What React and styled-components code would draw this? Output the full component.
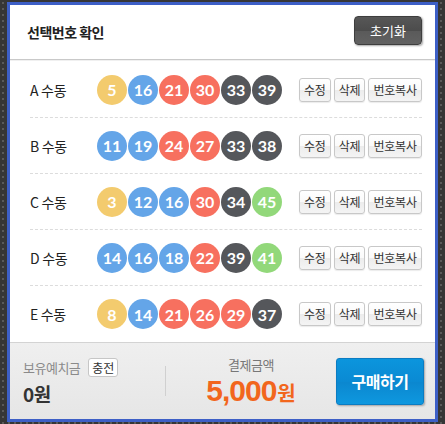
import styled, { createGlobalStyle } from 'styled-components';

const GlobalStyle = createGlobalStyle`
    * { box-sizing: border-box; }
    body {
        margin: 0;
        font-family: "Noto Sans CJK KR", "Noto Sans", sans-serif;
        background-color: #363636;
        background-image: radial-gradient(#5a5a5a 1px, transparent 1.4px);
        background-size: 6px 6px;
    }
`;

const Page = styled.div`
    height: 424px;
    padding: 2px 7px;
`;
const Panel = styled.div`
    display: flex;
    flex-direction: column;
    height: 420px;
    background: #fff;
    border: 3px solid #3d5fc6;
`;
const Header = styled.div`
    display: flex;
    align-items: center;
    justify-content: space-between;
    height: 55px;
    padding: 0 13px 0 17px;
    border-bottom: 1px solid #c9c9c9;
    box-shadow: 0 1px 0 #f0f0f0;
`;
const Title = styled.h2`
    margin: 0;
    font-size: 14px;
    font-weight: 700;
    letter-spacing: -0.5px;
    color: #222;
`;
const ResetButton = styled.button`
    width: 68px;
    height: 29px;
    margin-top: -3px;
    border: 1px solid #3e3e3e;
    border-radius: 4px;
    background: linear-gradient(#575757 0%, #4c4c4c 50%, #5a5a5a 51%, #616161 100%);
    box-shadow: 1px 1px 2px rgba(0, 0, 0, .35);
    color: #fff;
    font-family: inherit;
    font-size: 13px;
`;
const List = styled.div`
    flex: 1;
    padding: 2px 13px 0 20px;
`;
const Row = styled.div`
    display: flex;
    align-items: center;
    height: 56px;
    border-bottom: 1px dashed #dcdcdc;
    &:last-child {
        border-bottom: none;
    };
`;
const Label = styled.span`
    width: 67px;
    font-size: 14px;
    letter-spacing: -0.3px;
    color: #222;
`;
const Balls = styled.div`
    display: flex;
    gap: 1px;
    margin-right: 17px;
`;
const Ball = styled.span`
    display: flex;
    align-items: center;
    justify-content: center;
    width: 30px;
    height: 30px;
    border-radius: 50%;
    background: ${props => props.color};
    color: #fff;
    font-family: Lato, "Noto Sans", sans-serif;
    font-size: 16px;
    font-weight: 700;
`;
const Actions = styled.div`
    display: flex;
    gap: 3px;
`;
const SmallButton = styled.button`
    height: 24px;
    padding: 0 4px;
    border: 1px solid #c8c8c8;
    border-radius: 3px;
    background: linear-gradient(#fff 0%, #fafafa 50%, #ececec 51%, #f4f4f4 100%);
    box-shadow: 0 1px 1px rgba(0, 0, 0, .08);
    color: #333;
    font-family: inherit;
    font-size: 12px;
    letter-spacing: -0.2px;
    line-height: 1;
`;
const Footer = styled.div`
    display: flex;
    align-items: center;
    height: 77px;
    padding: 0 11px 0 13px;
    border-top: 1px solid #d3d3d3;
    background: linear-gradient(#efefef, #e6e6e6);
`;
const Deposit = styled.div`
    display: flex;
    flex-direction: column;
    gap: 6px;
    width: 142px;
    padding-top: 2px;
`;
const DepositTop = styled.div`
    display: flex;
    align-items: center;
    gap: 8px;
`;
const Caption = styled.span`
    font-size: 13px;
    letter-spacing: -0.5px;
    line-height: 1.2;
    color: ${props => props.dark ? '#777' : '#8a8a8a'};
`;
const ChargeButton = styled.button`
    height: 19px;
    padding: 0 3px;
    border: 1px solid #c6c6c6;
    border-radius: 3px;
    background: #fff;
    color: #333;
    font-family: inherit;
    font-size: 12px;
    line-height: 1;
`;
const Balance = styled.span`
    font-size: 19px;
    font-weight: 700;
    letter-spacing: -0.5px;
    line-height: 1.2;
    color: #333;
`;
const Divider = styled.div`
    width: 1px;
    height: 30px;
    background: #d0d0d0;
`;
const Total = styled.div`
    flex: 1;
    display: flex;
    flex-direction: column;
    align-items: center;
    gap: 3px;
    padding-top: 1px;
`;
const Amount = styled.div`
    display: flex;
    align-items: baseline;
    color: #f2661d;
    line-height: 1;
`;
const Digits = styled.span`
    font-family: "Liberation Sans", Arial, sans-serif;
    font-size: 30px;
    font-weight: 700;
    letter-spacing: -1px;
`;
const Won = styled.span`
    margin-left: 1px;
    font-size: 20px;
    font-weight: 700;
`;
const BuyButton = styled.button`
    width: 88px;
    height: 47px;
    border: 1px solid #0b7cc2;
    border-radius: 3px;
    background: linear-gradient(#0b95dd 0%, #0a8ad3 50%, #0b87cf 51%, #0e98df 100%);
    box-shadow: 1px 1px 2px rgba(0, 0, 0, .3);
    color: #fff;
    font-family: inherit;
    font-size: 16px;
    font-weight: 700;
    letter-spacing: -0.5px;
`;

const rows = [
    { name: 'A', nums: [5, 16, 21, 30, 33, 39] },
    { name: 'B', nums: [11, 19, 24, 27, 33, 38] },
    { name: 'C', nums: [3, 12, 16, 30, 34, 45] },
    { name: 'D', nums: [14, 16, 18, 22, 39, 41] },
    { name: 'E', nums: [8, 14, 21, 26, 29, 37] },
];

const ballColor = (n) => {
    if (n <= 10) return '#f3cb6e';
    if (n <= 20) return '#64a5e8';
    if (n <= 30) return '#f7705f';
    if (n <= 40) return '#55575b';
    return '#92d87a';
};

const App = () => {
    return (
        <Page>
            <GlobalStyle />
            <Panel>
                <Header>
                    <Title>선택번호 확인</Title>
                    <ResetButton>초기화</ResetButton>
                </Header>
                <List>
                    {rows.map(row => (
                        <Row key={row.name}>
                            <Label>{row.name} 수동</Label>
                            <Balls>
                                {row.nums.map(n => (
                                    <Ball key={n} color={ballColor(n)}>{n}</Ball>
                                ))}
                            </Balls>
                            <Actions>
                                <SmallButton>수정</SmallButton>
                                <SmallButton>삭제</SmallButton>
                                <SmallButton>번호복사</SmallButton>
                            </Actions>
                        </Row>
                    ))}
                </List>
                <Footer>
                    <Deposit>
                        <DepositTop>
                            <Caption>보유예치금</Caption>
                            <ChargeButton>충전</ChargeButton>
                        </DepositTop>
                        <Balance>0원</Balance>
                    </Deposit>
                    <Divider />
                    <Total>
                        <Caption dark>결제금액</Caption>
                        <Amount>
                            <Digits>5,000</Digits>
                            <Won>원</Won>
                        </Amount>
                    </Total>
                    <BuyButton>구매하기</BuyButton>
                </Footer>
            </Panel>
        </Page>
    );
};

export default App;
